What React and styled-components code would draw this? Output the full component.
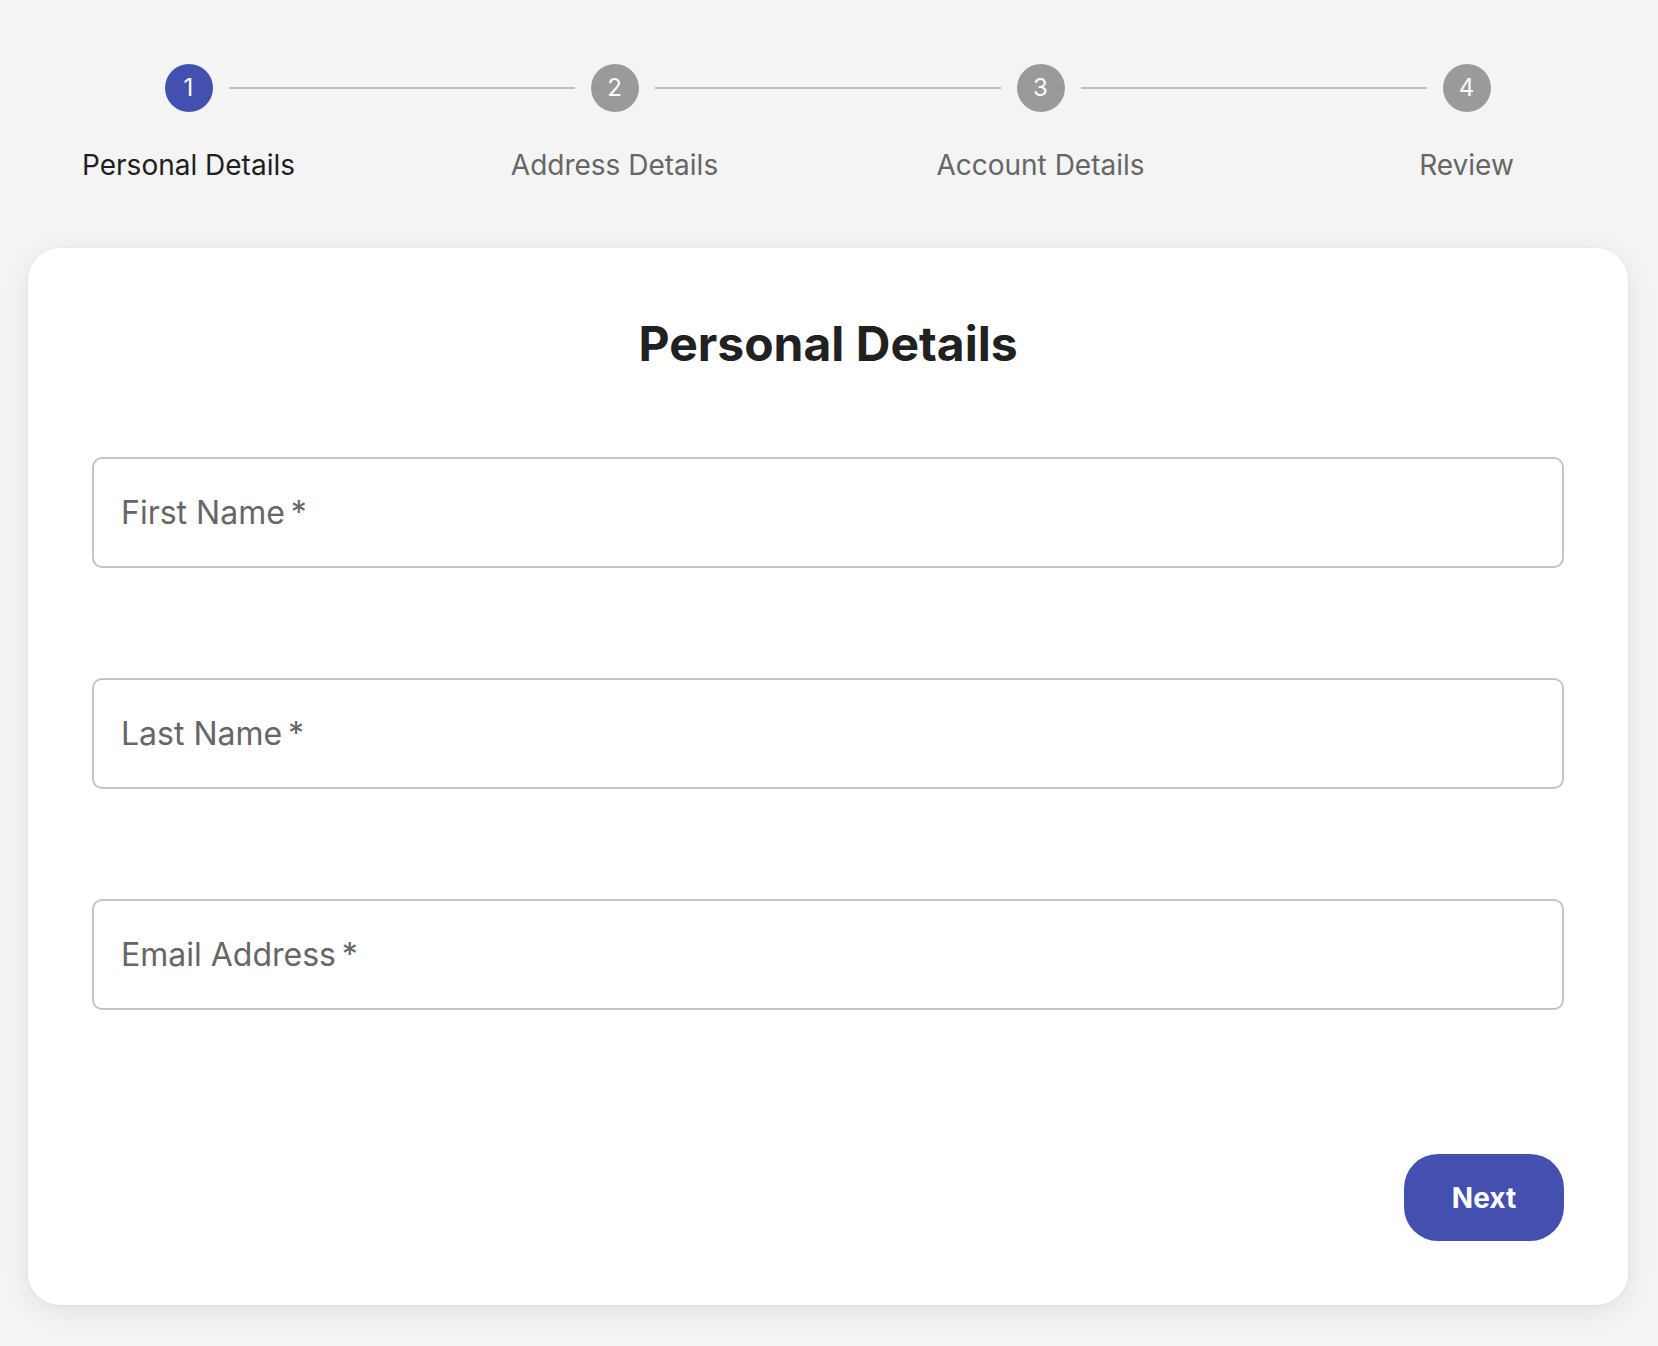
import React from "react";
import styled, { createGlobalStyle } from "styled-components";

const GlobalStyle = createGlobalStyle`
  html, body {
    margin: 0;
    padding: 0;
    background: #f4f4f4;
    font-family: Inter, "Noto Sans", "Liberation Sans", sans-serif;
    overflow-x: hidden;
  }
  * { box-sizing: border-box; }
`;

const Page = styled.div`
  min-height: 1346px;
  padding: 64px 0 40px;
  overflow: hidden;
`;

const Stepper = styled.div`
  display: grid;
  grid-template-columns: repeat(4, 426px);
  justify-content: center;
  margin-left: -3px;
`;

const Step = styled.div`
  display: flex;
  flex-direction: column;
  align-items: center;
`;

const StepTrack = styled.div`
  display: flex;
  align-items: center;
  width: 100%;
`;

const Connector = styled.span`
  flex: 1;
  height: 2px;
  background: ${(p) => (p.$hidden ? "transparent" : "#bdbdbd")};
  margin: ${(p) => (p.$side === "left" ? "0 16px 0 0" : "0 0 0 16px")};
`;

const Circle = styled.div`
  width: 48px;
  height: 48px;
  border-radius: 50%;
  flex: none;
  display: flex;
  align-items: center;
  justify-content: center;
  background: ${(p) => (p.$active ? "#4350af" : "#9a9a9a")};
  color: #fff;
  font-size: 24px;
  line-height: 1;
`;

const StepLabel = styled.div`
  margin-top: 33px;
  font-size: 28px;
  line-height: 40px;
  color: ${(p) => (p.$active ? "#1f1f1f" : "#666666")};
  white-space: nowrap;
`;

const Card = styled.div`
  width: 1600px;
  margin: 63px 0 0 28px;
  background: #fff;
  border-radius: 32px;
  padding: 64px;
  box-shadow: 0 6px 28px rgba(0, 0, 0, 0.08), 0 1px 4px rgba(0, 0, 0, 0.04);
`;

const Title = styled.h2`
  margin: 0 0 81px;
  text-align: center;
  font-size: 48px;
  line-height: 64px;
  font-weight: 700;
  color: #212121;
`;

const Fields = styled.div`
  display: flex;
  flex-direction: column;
  gap: 110px;
`;

const Input = styled.input`
  display: block;
  width: 100%;
  height: 111px;
  padding: 0 27px;
  border: 2px solid #c4c4c4;
  border-radius: 10px;
  background: #fff;
  font-family: inherit;
  font-size: 32px;
  color: #212121;
  outline: none;
  &::placeholder {
    color: #666666;
    opacity: 1;
  }
`;

const Actions = styled.div`
  display: flex;
  justify-content: flex-end;
  margin-top: 144px;
`;

const NextButton = styled.button`
  width: 160px;
  height: 87px;
  border: none;
  border-radius: 34px;
  background: #4350af;
  color: #fff;
  font-family: inherit;
  font-size: 28px;
  font-weight: 700;
  cursor: pointer;
`;

const steps = ["Personal Details", "Address Details", "Account Details", "Review"];
const fields = ["First Name\u2009*", "Last Name\u2009*", "Email Address\u2009*"];

export default function App() {
  const activeStep = 0;
  return (
    <>
      <GlobalStyle />
      <Page>
        <Stepper>
          {steps.map((label, i) => (
            <Step key={label}>
              <StepTrack>
                <Connector $side="left" $hidden={i === 0} />
                <Circle $active={i === activeStep}>{i + 1}</Circle>
                <Connector $side="right" $hidden={i === steps.length - 1} />
              </StepTrack>
              <StepLabel $active={i === activeStep}>{label}</StepLabel>
            </Step>
          ))}
        </Stepper>
        <Card>
          <Title>Personal Details</Title>
          <Fields>
            {fields.map((f) => (
              <Input key={f} placeholder={f} />
            ))}
          </Fields>
          <Actions>
            <NextButton>Next</NextButton>
          </Actions>
        </Card>
      </Page>
    </>
  );
}
